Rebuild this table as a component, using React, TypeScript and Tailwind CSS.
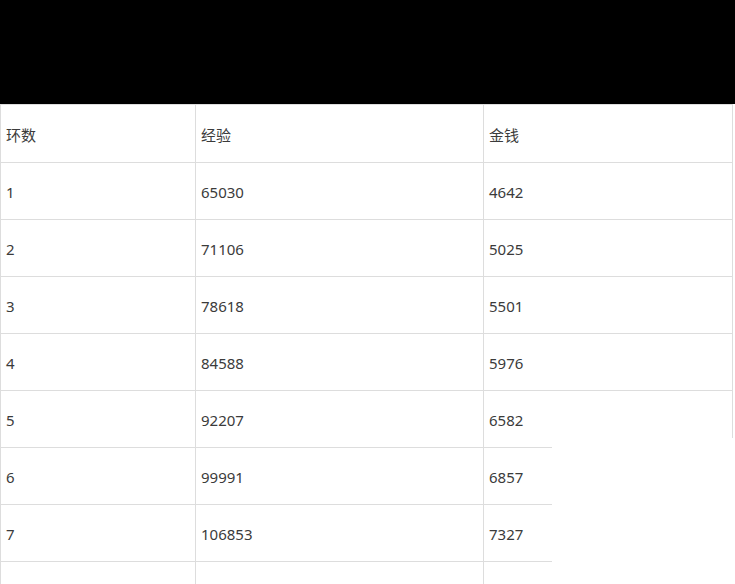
const rows = [
  ['1', '65030', '4642'],
  ['2', '71106', '5025'],
  ['3', '78618', '5501'],
  ['4', '84588', '5976'],
  ['5', '92207', '6582'],
  ['6', '99991', '6857'],
  ['7', '106853', '7327'],
  ['8', '', ''],
];

export default function App() {
  const cell = 'border border-[#dddddd] pl-[5px] pr-2 pt-[3px] text-left font-normal align-middle';

  return (
    <div className="relative h-[584px] w-[735px] overflow-hidden bg-white font-['Noto_Sans','Noto_Sans_CJK_SC',sans-serif] text-[15px] text-[#3b3b3b]">
      {/* top bar */}
      <div className="h-[104px] bg-black" />

      <table className="w-[732px] table-fixed border-collapse">
        <colgroup>
          <col className="w-[195px]" />
          <col className="w-[288px]" />
          <col className="w-[249px]" />
        </colgroup>
        <thead>
          <tr className="h-[58px]">
            <th className={cell}>环数</th>
            <th className={cell}>经验</th>
            <th className={cell}>金钱</th>
          </tr>
        </thead>
        <tbody>
          {rows.map((r) => (
            <tr key={r[0]} className="h-[57px]">
              <td className={cell}>{r[0] === '8' ? '' : r[0]}</td>
              <td className={cell}>{r[1]}</td>
              <td className={cell}>{r[2]}</td>
            </tr>
          ))}
        </tbody>
      </table>

      {/* white patch covering the lower right of the screenshot */}
      <div className="absolute left-[552px] top-[438px] h-[146px] w-[183px] bg-white" />
    </div>
  );
}
